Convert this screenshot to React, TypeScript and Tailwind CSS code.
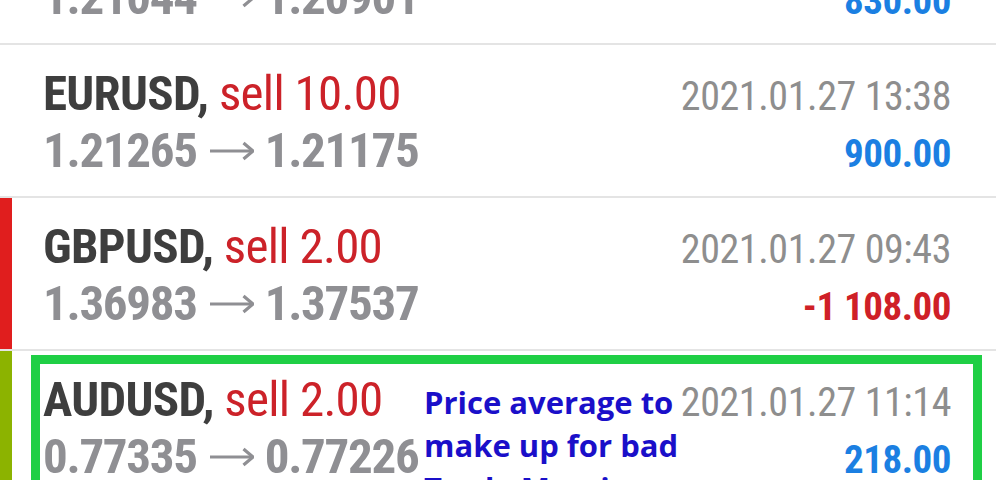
import React from "react";

type Row = {
  pair: string;
  vol: string;
  open: string;
  close: string;
  time: string;
  profit: string;
  loss?: boolean;
  strip: string;
};

const rows: Row[] = [
  { pair: "EURUSD", vol: "10.00", open: "1.21044", close: "1.20901", time: "2021.01.27 14:02", profit: "830.00", strip: "bg-transparent" },
  { pair: "EURUSD", vol: "10.00", open: "1.21265", close: "1.21175", time: "2021.01.27 13:38", profit: "900.00", strip: "bg-transparent" },
  { pair: "GBPUSD", vol: "2.00", open: "1.36983", close: "1.37537", time: "2021.01.27 09:43", profit: "-1 108.00", loss: true, strip: "bg-[#e01e1e]" },
  { pair: "AUDUSD", vol: "2.00", open: "0.77335", close: "0.77226", time: "2021.01.27 11:14", profit: "218.00", strip: "bg-[#8cb300]" },
];

function Arrow() {
  return (
    <svg width="44" height="20" viewBox="0 0 44 20" className="ml-[13px] mr-[11px] inline-block" fill="none" stroke="#8f8f93" strokeWidth="3.2" strokeLinecap="butt">
      <path d="M0 10H42" />
      <path d="M33.5 2L43 10L33.5 18" />
    </svg>
  );
}

function TradeRow({ r, first }: { r: Row; first?: boolean }) {
  return (
    <div className={`flex h-[153px] shrink-0 border-b-2 border-[#e4e4e4] ${first ? "mt-[-108px]" : ""}`}>
      <div className={`w-[12px] shrink-0 ${r.strip}`} />
      <div className="flex flex-1 flex-col pl-[31px] pr-[45px] pt-[22px]">
        <div className="flex items-baseline justify-between leading-[54px]">
          <div className="whitespace-nowrap text-[49px] tracking-[-0.7px]">
            <span className="font-bold text-[#3e3e3e]">{r.pair},</span>
            <span className="text-[#cc2229]"> sell {r.vol}</span>
          </div>
          <div className="whitespace-nowrap text-[40px] tracking-[-0.4px] text-[#8e8e8e]">{r.time}</div>
        </div>
        <div className="flex items-baseline justify-between leading-[54px]">
          <div className="flex items-center whitespace-nowrap text-[49px] tracking-[-1.3px] text-[#8f8f93]">
            <span className="font-bold">{r.open}</span>
            <Arrow />
            <span className="font-bold">{r.close}</span>
          </div>
          <div className={`whitespace-nowrap text-[39px] font-bold tracking-[-0.5px] ${r.loss ? "text-[#cf2027]" : "text-[#1b7fe2]"}`}>
            {r.profit}
          </div>
        </div>
      </div>
    </div>
  );
}

export default function App() {
  return (
    <div className="relative flex h-[480px] w-[996px] flex-col overflow-hidden bg-white font-['Roboto_Condensed','Roboto',sans-serif]">
      {rows.map((r, i) => (
        <TradeRow key={i} r={r} first={i === 0} />
      ))}
      <div className="absolute left-[31px] top-[355px] h-[200px] w-[951px] border-[9px] border-[#1fcf45]" />
      <div className="absolute left-[424px] top-[381px] whitespace-nowrap font-['Open_Sans',sans-serif] text-[31px] font-bold leading-[43px] text-[#1a0fc9]">
        Price average to
        <br />
        make up for bad
        <br />
        Trade Margin
      </div>
    </div>
  );
}
